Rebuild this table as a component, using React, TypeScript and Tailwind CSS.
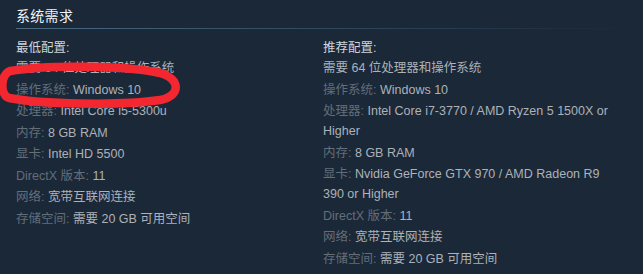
import React from "react";

type Req = { label?: string; value: string };

const minReqs: Req[] = [
    { value: "需要 64 位处理器和操作系统" },
    { label: "操作系统:", value: "Windows 10" },
    { label: "处理器:", value: "Intel Core i5-5300u" },
    { label: "内存:", value: "8 GB RAM" },
    { label: "显卡:", value: "Intel HD 5500" },
    { label: "DirectX 版本:", value: "11" },
    { label: "网络:", value: "宽带互联网连接" },
    { label: "存储空间:", value: "需要 20 GB 可用空间" },
];

const recReqs: Req[] = [
    { value: "需要 64 位处理器和操作系统" },
    { label: "操作系统:", value: "Windows 10" },
    { label: "处理器:", value: "Intel Core i7-3770 / AMD Ryzen 5 1500X or Higher" },
    { label: "内存:", value: "8 GB RAM" },
    { label: "显卡:", value: "Nvidia GeForce GTX 970 / AMD Radeon R9 390 or Higher" },
    { label: "DirectX 版本:", value: "11" },
    { label: "网络:", value: "宽带互联网连接" },
    { label: "存储空间:", value: "需要 20 GB 可用空间" },
];

function ReqColumn({ title, items }: { title: string; items: Req[] }) {
    return (
        <div>
            <div className="text-[#cfd4d9] leading-[20px]">{title}</div>
            <ul>
                {items.map((item, i) => (
                    <li key={i} className="leading-[20px] mb-[1.5px] text-[#acb2b8]">
                        {item.label && <span className="text-[#626e7a]">{item.label} </span>}
                        {item.value}
                    </li>
                ))}
            </ul>
        </div>
    );
}

export default function App() {
    return (
        <div
            className="relative w-[643px] h-[274px] overflow-hidden bg-[#1b2838] px-4 pt-[6px] text-[12.5px]"
            style={{ fontFamily: '"Liberation Sans", "Noto Sans CJK SC", sans-serif' }}
        >
            <h2 className="text-[14px] leading-[20px] tracking-[0.3px] text-[#f2f4f5] pb-[2px]">系统需求</h2>
            <div className="h-px w-full bg-gradient-to-r from-[#4a6a84] via-[#2e4a60] to-transparent" />
            <div className="mt-[9px] grid grid-cols-[307px_295px]">
                <ReqColumn title="最低配置:" items={minReqs} />
                <ReqColumn title="推荐配置:" items={recReqs} />
            </div>

            {/* red marker circle drawn over the OS row */}
            <svg className="absolute left-0 top-0 pointer-events-none" width="200" height="120" viewBox="0 0 200 120">
                <path
                    d="M 10 71 C 50 64, 130 66, 160 73 C 181 79, 181 96, 160 100 C 120 106, 40 104, 9 98 C 0 95, 0 75, 10 71"
                    fill="none"
                    stroke="#f22730"
                    strokeWidth="8.5"
                    strokeLinecap="round"
                />
            </svg>
        </div>
    );
}
